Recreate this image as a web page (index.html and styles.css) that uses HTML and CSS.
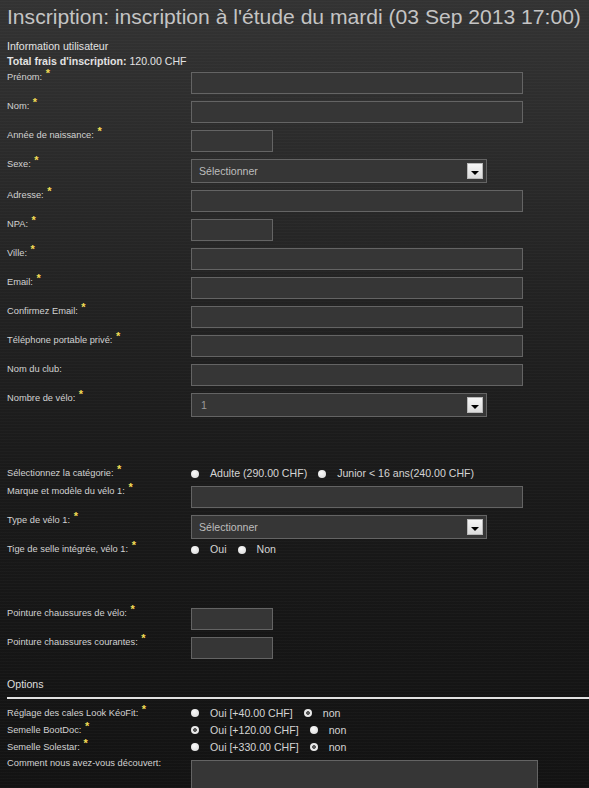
FILE: index.html
```html
<!DOCTYPE html>
<html lang="fr">
<head>
<meta charset="utf-8">
<title>Inscription</title>
<link rel="stylesheet" href="styles.css">
</head>
<body>
<div class="page">
  <h1 class="title">Inscription: inscription à l'étude du mardi (03 Sep 2013 17:00)</h1>
  <div class="info">Information utilisateur</div>
  <div class="total"><b>Total frais d'inscription:</b> 120.00 CHF</div>

  <div class="form">
    <div class="row"><span class="label">Prénom: <span class="req">*</span></span><span class="field wide"></span></div>
    <div class="row"><span class="label">Nom: <span class="req">*</span></span><span class="field wide"></span></div>
    <div class="row"><span class="label">Année de naissance: <span class="req">*</span></span><span class="field small"></span></div>
    <div class="row"><span class="label">Sexe: <span class="req">*</span></span><span class="field select"><span>Sélectionner</span><span class="arrow"><span class="tri"></span></span></span></div>
    <div class="row"><span class="label">Adresse: <span class="req">*</span></span><span class="field wide"></span></div>
    <div class="row"><span class="label">NPA: <span class="req">*</span></span><span class="field small"></span></div>
    <div class="row"><span class="label">Ville: <span class="req">*</span></span><span class="field wide"></span></div>
    <div class="row"><span class="label">Email: <span class="req">*</span></span><span class="field wide"></span></div>
    <div class="row"><span class="label">Confirmez Email: <span class="req">*</span></span><span class="field wide"></span></div>
    <div class="row"><span class="label">Téléphone portable privé: <span class="req">*</span></span><span class="field wide"></span></div>
    <div class="row"><span class="label">Nom du club:</span><span class="field wide"></span></div>
    <div class="row"><span class="label">Nombre de vélo: <span class="req">*</span></span><span class="field select"><span class="num">1</span><span class="arrow"><span class="tri"></span></span></span></div>

    <div class="spacer-a"></div>

    <div class="row radio-row cat"><span class="label">Sélectionnez la catégorie: <span class="req">*</span></span>
      <span class="radios"><span class="radio"></span><span class="opt">Adulte (290.00 CHF)</span><span class="radio"></span><span class="opt">Junior &lt; 16 ans(240.00 CHF)</span></span></div>
    <div class="row"><span class="label">Marque et modèle du vélo 1: <span class="req">*</span></span><span class="field wide"></span></div>
    <div class="row tight"><span class="label">Type de vélo 1: <span class="req">*</span></span><span class="field select"><span>Sélectionner</span><span class="arrow"><span class="tri"></span></span></span></div>
    <div class="row radio-row"><span class="label">Tige de selle intégrée, vélo 1: <span class="req">*</span></span>
      <span class="radios"><span class="radio"></span><span class="opt">Oui</span><span class="radio"></span><span class="opt">Non</span></span></div>

    <div class="spacer-b"></div>

    <div class="row"><span class="label">Pointure chaussures de vélo: <span class="req">*</span></span><span class="field small"></span></div>
    <div class="row last"><span class="label">Pointure chaussures courantes: <span class="req">*</span></span><span class="field small"></span></div>
  </div>

  <div class="section">Options</div>

  <div class="options">
    <div class="row radio-row opt-row"><span class="label">Réglage des cales Look KéoFit: <span class="req">*</span></span>
      <span class="radios"><span class="radio"></span><span class="opt">Oui [+40.00 CHF]</span><span class="radio on"></span><span class="opt">non</span></span></div>
    <div class="row radio-row opt-row"><span class="label">Semelle BootDoc: <span class="req">*</span></span>
      <span class="radios"><span class="radio on"></span><span class="opt">Oui [+120.00 CHF]</span><span class="radio"></span><span class="opt">non</span></span></div>
    <div class="row radio-row opt-row"><span class="label">Semelle Solestar: <span class="req">*</span></span>
      <span class="radios"><span class="radio"></span><span class="opt">Oui [+330.00 CHF]</span><span class="radio on"></span><span class="opt">non</span></span></div>
    <div class="row comment"><span class="label">Comment nous avez-vous découvert:</span><span class="field area"></span></div>
  </div>
</div>
</body>
</html>
```

FILE: styles.css
```css
html, body {
  margin: 0;
  padding: 0;
}

body {
  min-height: 788px;
  overflow: hidden;
  font-family: "Liberation Sans", Arial, sans-serif;
  color: #d6d6d6;
  background-color: #141414;
  background-image:
    repeating-linear-gradient(0deg, rgba(255,255,255,0.018) 0 1px, rgba(0,0,0,0) 1px 3px),
    linear-gradient(to bottom, #333 0, #2b2b2b 150px, #222 300px, #1b1b1b 450px, #161616 620px, #131313 788px);
}

.page {
  padding: 0 0 0 7px;
}

.title {
  margin: 0;
  padding-top: 4px;
  font-size: 21.1px;
  font-weight: normal;
  line-height: 26px;
  color: #c4c4c4;
  white-space: nowrap;
}

.info {
  margin-top: 8.5px;
  font-size: 10.6px;
  line-height: 15px;
  color: #e2e2e2;
}

.total {
  font-size: 10.6px;
  line-height: 15px;
  color: #e2e2e2;
}

.form {
  margin-top: 3.5px;
}

.row {
  display: grid;
  grid-template-columns: 184px auto;
  align-items: start;
  margin-bottom: 7px;
}

.row.last {
  margin-bottom: 0;
}

.label {
  font-size: 9.3px;
  line-height: 11px;
  color: #d2d2d2;
  white-space: nowrap;
}

.req {
  position: relative;
  top: -3px;
  margin-left: 1px;
  font-size: 11px;
  line-height: 0;
  font-weight: bold;
  color: #f3dc55;
}

.field {
  display: block;
  box-sizing: border-box;
  height: 22px;
  border: 1px solid #646464;
  background: #363636;
}

.wide { width: 332px; }
.small { width: 82px; }

.select {
  width: 296px;
  height: 24px;
  display: flex;
  align-items: center;
  justify-content: space-between;
  padding: 0 3px 0 7px;
  font-size: 10.6px;
  color: #bdbdbd;
}

.select .num {
  padding-left: 2px;
  color: #9a9a9a;
}

.arrow {
  box-sizing: border-box;
  width: 16px;
  height: 16px;
  border: 1px solid #b8b8b8;
  background: linear-gradient(to bottom, #f6f6f6, #dcdcdc);
  display: flex;
  justify-content: center;
  align-items: center;
}

.tri {
  width: 0;
  height: 0;
  margin-top: 3px;
  border-left: 4px solid transparent;
  border-right: 4px solid transparent;
  border-top: 4px solid #000;
}

.tight { margin-bottom: 4px; }

.spacer-a { height: 43px; }
.spacer-b { height: 45px; }

.radio-row {
  align-items: center;
}

.radio-row .label {
  line-height: 13px;
}

.cat { margin-bottom: 6px; }

.radios {
  display: flex;
  align-items: center;
  font-size: 10.6px;
  line-height: 13px;
  color: #d4d4d4;
  white-space: nowrap;
}

.radio {
  flex: none;
  width: 8px;
  height: 8px;
  border-radius: 50%;
  background: radial-gradient(circle at 40% 35%, #fafafa, #d6d6d6);
  margin-right: 11px;
}

.opt + .radio {
  margin-left: 11px;
}

.radio.on {
  background: radial-gradient(circle, #5a5a5a 0 1.6px, #e8e8e8 2.2px);
}

.section {
  margin-top: 18px;
  padding-bottom: 5px;
  border-bottom: 2px solid #e2e2e2;
  font-size: 10.6px;
  line-height: 15px;
  color: #dedede;
}

.options {
  padding-top: 7.5px;
}

.opt-row {
  margin-bottom: 4px;
}

.comment .label {
  line-height: 11px;
}

.area {
  width: 347px;
  height: 60px;
  margin-top: 2.5px;
}
```
